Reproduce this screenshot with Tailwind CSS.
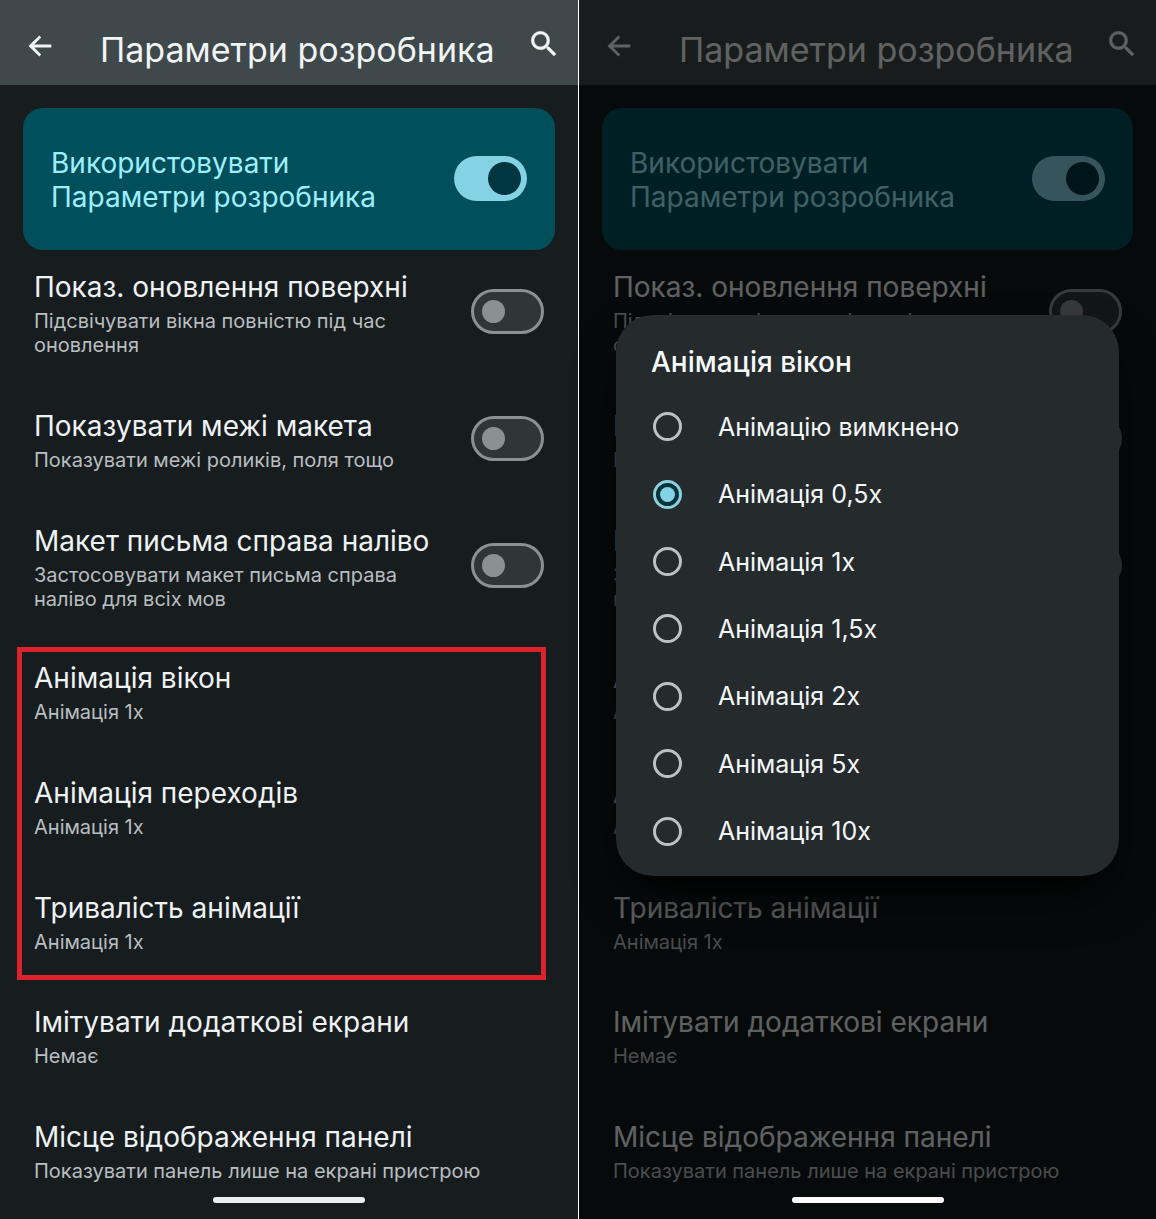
<!DOCTYPE html>
<html lang="uk">
<head>
<meta charset="utf-8">
<meta name="viewport" content="width=device-width, initial-scale=1">
<title>Параметри розробника</title>
<script src="https://cdn.jsdelivr.net/npm/@tailwindcss/browser@4"></script>
</head>
<body class="bg-[#171c1f] font-['Inter',sans-serif]">

<!-- Settings list shared by both screens -->
<template id="settings">
  <header class="flex h-[85px] items-center bg-[#3f484a] pt-[6px] pl-6 pr-[17px] text-[#f1f4f5]">
    <button type="button" aria-label="Назад" class="shrink-0">
      <svg class="size-8" viewBox="0 0 24 24" fill="currentColor"><path d="M20.500 10.9H7.700l5.200-5.200L11.500 4.200 3.400 12l8.100 7.900 1.400-1.500-5.200-5.200h12.800z"/></svg>
    </button>
    <h1 class="ml-[44px] grow pt-2 text-[34px] leading-[40px] whitespace-nowrap">Параметри розробника</h1>
    <button type="button" aria-label="Пошук" class="shrink-0 pb-[3px]">
      <svg class="size-[34px]" viewBox="0 0 24 24" fill="currentColor"><path d="M15.5 14h-.79l-.28-.27A6.47 6.47 0 0 0 16 9.500 6.5 6.5 0 1 0 9.500 16c1.610 0 3.090-.59 4.230-1.570l.27.28v.79l5 4.990L20.490 19l-4.990-5zm-6 0C7.010 14 5 11.990 5 9.500S7.010 5 9.500 5 14 7.010 14 9.500 11.990 14 9.500 14z" stroke="currentColor" stroke-width=".3"/></svg>
    </button>
  </header>

  <main class="pt-[23px]">
    <label class="mx-[23px] flex h-[142px] items-center justify-between gap-6 rounded-[20px] bg-[#004f5b] px-7 pb-px text-[#9eeffd]">
      <span class="pt-[3px] text-[28px] leading-[34px]">Використовувати Параметри розробника</span>
      <input type="checkbox" role="switch" checked class="flex h-[45px] w-[73px] shrink-0 appearance-none items-center justify-end rounded-full bg-[#86d2e5] px-[6px] before:size-[33px] before:rounded-full before:bg-[#003640]">
    </label>

    <div class="flex flex-col gap-[47px] px-[34px] pt-[15px]">
      <label class="flex items-center justify-between gap-6">
        <span class="flex flex-col">
          <span class="text-[28px] leading-[44px] whitespace-nowrap text-[#eef2f3]">Показ. оновлення поверхні</span>
          <span class="text-[20px] leading-[24px] text-[#b9bec0]">Підсвічувати вікна повністю під час оновлення</span>
        </span>
        <input type="checkbox" role="switch" class="flex h-[45px] w-[73px] shrink-0 appearance-none items-center rounded-full border-[3px] border-[#899193] bg-[#303638] px-[8px] before:size-[23px] before:rounded-full before:bg-[#899193]">
      </label>
      <label class="flex items-center justify-between gap-6">
        <span class="flex flex-col">
          <span class="text-[28px] leading-[44px] whitespace-nowrap text-[#eef2f3]">Показувати межі макета</span>
          <span class="text-[20px] leading-[24px] text-[#b9bec0]">Показувати межі роликів, поля тощо</span>
        </span>
        <input type="checkbox" role="switch" class="flex h-[45px] w-[73px] shrink-0 appearance-none items-center rounded-full border-[3px] border-[#899193] bg-[#303638] px-[8px] before:size-[23px] before:rounded-full before:bg-[#899193]">
      </label>
      <label class="flex items-center justify-between gap-6">
        <span class="flex flex-col">
          <span class="text-[28px] leading-[44px] whitespace-nowrap text-[#eef2f3]">Макет письма справа наліво</span>
          <span class="text-[20px] leading-[24px] text-[#b9bec0]">Застосовувати макет письма справа наліво для всіх мов</span>
        </span>
        <input type="checkbox" role="switch" class="flex h-[45px] w-[73px] shrink-0 appearance-none items-center rounded-full border-[3px] border-[#899193] bg-[#303638] px-[8px] before:size-[23px] before:rounded-full before:bg-[#899193]">
      </label>
    </div>

    <div class="mt-9 mr-8 ml-[17px] flex flex-col gap-[47px] border-[5px] border-transparent px-3 pt-1 pb-[21px] group-data-[marked]:border-[#dc222b]">
      <button type="button" class="flex flex-col text-left">
        <span class="text-[28px] leading-[44px] text-[#eef2f3]">Анімація вікон</span>
        <span class="text-[20px] leading-[24px] text-[#b9bec0]">Анімація 1x</span>
      </button>
      <button type="button" class="flex flex-col text-left">
        <span class="text-[28px] leading-[44px] text-[#eef2f3]">Анімація переходів</span>
        <span class="text-[20px] leading-[24px] text-[#b9bec0]">Анімація 1x</span>
      </button>
      <button type="button" class="flex flex-col text-left">
        <span class="text-[28px] leading-[44px] text-[#eef2f3]">Тривалість анімації</span>
        <span class="text-[20px] leading-[24px] text-[#b9bec0]">Анімація 1x</span>
      </button>
    </div>

    <div class="flex flex-col gap-[47px] px-[34px] pt-5 pb-[35px]">
      <button type="button" class="flex flex-col text-left">
        <span class="text-[28px] leading-[44px] text-[#eef2f3]">Імітувати додаткові екрани</span>
        <span class="text-[20px] leading-[24px] text-[#b9bec0]">Немає</span>
      </button>
      <button type="button" class="flex flex-col text-left">
        <span class="text-[28px] leading-[44px] text-[#eef2f3]">Місце відображення панелі</span>
        <span class="text-[20px] leading-[24px] text-[#b9bec0]">Показувати панель лише на екрані пристрою</span>
      </button>
    </div>
  </main>
</template>

<div class="flex min-h-screen">
  <section data-screen data-marked class="group relative w-1/2">
    <div class="absolute bottom-4 left-1/2 h-[6px] w-[152px] -translate-x-1/2 rounded-full bg-[#e9eff0]"></div>
  </section>

  <section data-screen class="relative w-1/2 border-l border-white bg-[#121a1d]">
    <div class="absolute inset-0 bg-black/60"></div>
    <div role="dialog" aria-labelledby="dialog-title" class="absolute inset-x-[37px] top-[315px] rounded-[37px] bg-[#252a2d] px-[35px] pb-[11px] shadow-2xl shadow-black">
      <h2 id="dialog-title" class="pt-[29px] pb-[13px] text-[28px] leading-[36px] font-medium text-[#f6f9fa]">Анімація вікон</h2>
      <div class="grid h-[472px] grid-rows-7 text-[25px] leading-[30px] text-[#f4f7f8]">
        <label class="flex items-center gap-[36px] pl-[2px]"><input type="radio" name="scale" class="grid size-[29px] shrink-0 appearance-none place-items-center rounded-full border-[3px] border-[#bcc1c3] checked:border-[#8ed0dc] checked:bg-[#01343d] checked:before:size-[15px] checked:before:rounded-full checked:before:bg-[#86d2e5]">Анімацію вимкнено</label>
        <label class="flex items-center gap-[36px] pl-[2px]"><input type="radio" name="scale" checked class="grid size-[29px] shrink-0 appearance-none place-items-center rounded-full border-[3px] border-[#bcc1c3] checked:border-[#8ed0dc] checked:bg-[#01343d] checked:before:size-[15px] checked:before:rounded-full checked:before:bg-[#86d2e5]">Анімація 0,5x</label>
        <label class="flex items-center gap-[36px] pl-[2px]"><input type="radio" name="scale" class="grid size-[29px] shrink-0 appearance-none place-items-center rounded-full border-[3px] border-[#bcc1c3] checked:border-[#8ed0dc] checked:bg-[#01343d] checked:before:size-[15px] checked:before:rounded-full checked:before:bg-[#86d2e5]">Анімація 1x</label>
        <label class="flex items-center gap-[36px] pl-[2px]"><input type="radio" name="scale" class="grid size-[29px] shrink-0 appearance-none place-items-center rounded-full border-[3px] border-[#bcc1c3] checked:border-[#8ed0dc] checked:bg-[#01343d] checked:before:size-[15px] checked:before:rounded-full checked:before:bg-[#86d2e5]">Анімація 1,5x</label>
        <label class="flex items-center gap-[36px] pl-[2px]"><input type="radio" name="scale" class="grid size-[29px] shrink-0 appearance-none place-items-center rounded-full border-[3px] border-[#bcc1c3] checked:border-[#8ed0dc] checked:bg-[#01343d] checked:before:size-[15px] checked:before:rounded-full checked:before:bg-[#86d2e5]">Анімація 2x</label>
        <label class="flex items-center gap-[36px] pl-[2px]"><input type="radio" name="scale" class="grid size-[29px] shrink-0 appearance-none place-items-center rounded-full border-[3px] border-[#bcc1c3] checked:border-[#8ed0dc] checked:bg-[#01343d] checked:before:size-[15px] checked:before:rounded-full checked:before:bg-[#86d2e5]">Анімація 5x</label>
        <label class="flex items-center gap-[36px] pl-[2px]"><input type="radio" name="scale" class="grid size-[29px] shrink-0 appearance-none place-items-center rounded-full border-[3px] border-[#bcc1c3] checked:border-[#8ed0dc] checked:bg-[#01343d] checked:before:size-[15px] checked:before:rounded-full checked:before:bg-[#86d2e5]">Анімація 10x</label>
      </div>
    </div>
    <div class="absolute bottom-4 left-1/2 h-[6px] w-[152px] -translate-x-1/2 rounded-full bg-white"></div>
  </section>
</div>

<script>
  const settings = document.getElementById('settings');
  document.querySelectorAll('[data-screen]').forEach(screen => screen.prepend(settings.content.cloneNode(true)));
</script>
</body>
</html>
